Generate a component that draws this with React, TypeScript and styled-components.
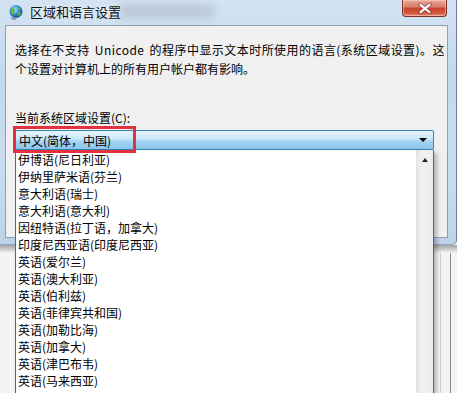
import styled, { createGlobalStyle } from "styled-components";

const GlobalStyle = createGlobalStyle`
  html, body {
    margin: 0;
    padding: 0;
    background: #dfe7ef;
  }
  * {
    box-sizing: border-box;
  }
`;

const items = [
  "伊博语(尼日利亚)",
  "伊纳里萨米语(芬兰)",
  "意大利语(瑞士)",
  "意大利语(意大利)",
  "因纽特语(拉丁语，加拿大)",
  "印度尼西亚语(印度尼西亚)",
  "英语(爱尔兰)",
  "英语(澳大利亚)",
  "英语(伯利兹)",
  "英语(菲律宾共和国)",
  "英语(加勒比海)",
  "英语(加拿大)",
  "英语(津巴布韦)",
  "英语(马来西亚)",
];

function GlobeIcon() {
  return (
    <svg width="16" height="16" viewBox="0 0 16 16">
      <defs>
        <radialGradient id="gl" cx="40%" cy="35%" r="65%">
          <stop offset="0%" stopColor="#bfe6ff" />
          <stop offset="55%" stopColor="#2f8fd8" />
          <stop offset="100%" stopColor="#124f96" />
        </radialGradient>
      </defs>
      <circle cx="8" cy="7.5" r="6.5" fill="url(#gl)" />
      <path
        d="M4 4.5c1.2-.6 2.4-.2 3 .8.4.8-.3 1.6-1.2 1.8-.9.3-1.1 1.2-.6 2 .5.9.2 1.9-.8 2.2-1.2-1-2-2.6-2-4.3 0-1 .6-1.9 1.6-2.5z M9.5 3c1.3.2 2.6 1 3.3 2.3-.8.4-1.6.1-2.2-.5-.5-.5-1.2-.9-1.1-1.8z M10.5 8.2c.9-.3 1.9.2 2.3 1-.4 1.4-1.4 2.5-2.6 3.1-.6-.9-.4-2.2.3-4.1z"
        fill="#5cb83a"
      />
      <path d="M3 13.5c1.5 1.6 3.5 1.9 5.2 1.2" stroke="#8e9aa6" strokeWidth="1.6" fill="none" />
    </svg>
  );
}

function App() {
  return (
    <>
      <GlobalStyle />
      <Screen>
        <DialogWindow>
          <TitleBar>
            <GlassSmudge />
            <TitleLeft>
              <GlobeIcon />
              <TitleText>区域和语言设置</TitleText>
            </TitleLeft>
            <CloseButton>
              <svg width="14" height="11" viewBox="0 0 14 11">
                <path
                  d="M2 1.5 L12 9.5 M12 1.5 L2 9.5"
                  stroke="#5a1a14"
                  strokeWidth="3.6"
                  strokeLinecap="round"
                  opacity="0.45"
                />
                <path
                  d="M2.5 1.8 L11.5 9.2 M11.5 1.8 L2.5 9.2"
                  stroke="#ffffff"
                  strokeWidth="2.2"
                  strokeLinecap="round"
                />
              </svg>
            </CloseButton>
          </TitleBar>
          <ClientArea>
            <Description>
              <DescLine $wide>
                选择在不支持 Unicode 的程序中显示文本时所使用的语言(系统区域设置)。这
              </DescLine>
              <DescLine>个设置对计算机上的所有用户帐户都有影响。</DescLine>
            </Description>
            <FieldLabel>当前系统区域设置(C):</FieldLabel>
            <ComboBox>
              <ComboText>中文(简体，中国)</ComboText>
              <ComboArrow />
            </ComboBox>
          </ClientArea>
        </DialogWindow>
        <BehindArea>
          <ShadowBand />
          <BehindLines>
            <BehindLine />
            <BehindLine $dark />
          </BehindLines>
        </BehindArea>

        <DropList>
          <ItemColumn>
            {items.map((name) => (
              <ListItem key={name}>{name}</ListItem>
            ))}
          </ItemColumn>
          <ScrollBar>
            <ScrollUp />
          </ScrollBar>
        </DropList>
        <Highlight />
      </Screen>
    </>
  );
}

const Screen = styled.div`
  position: relative;
  width: 457px;
  height: 393px;
  overflow: hidden;
  display: flex;
  flex-direction: column;
  font-family: "Noto Sans CJK SC", "Liberation Sans", sans-serif;
  font-size: 12px;
  color: #000;
  background: #f2f2f2;
`;

const DialogWindow = styled.div`
  height: 245px;
  flex-shrink: 0;
  display: flex;
  flex-direction: column;
  padding: 0 8px 6px 5px;
  background: linear-gradient(
    180deg,
    #d3e3f3 0%,
    #c5d9ee 30%,
    #c9dcef 70%,
    #bed3ea 100%
  );
  border-bottom: 1px solid #8fa6bf;
  border-right: 1px solid #6f8194;
  border-bottom-right-radius: 5px;
`;

const TitleBar = styled.div`
  position: relative;
  height: 25px;
  flex-shrink: 0;
  display: flex;
  align-items: flex-start;
  justify-content: space-between;
`;

const GlassSmudge = styled.div`
  position: absolute;
  left: 110px;
  top: 5px;
  width: 100px;
  height: 12px;
  background: rgba(90, 100, 115, 0.22);
  filter: blur(5px);
  border-radius: 6px;
`;

const TitleLeft = styled.div`
  position: relative;
  display: flex;
  align-items: center;
  gap: 6px;
  padding: 3px 0 0 3px;
`;

const TitleText = styled.span`
  font-size: 13px;
  line-height: 18px;
  color: #111;
  text-shadow: 0 0 6px rgba(255, 255, 255, 0.9);
`;

const CloseButton = styled.div`
  width: 45px;
  height: 17px;
  margin-right: 1px;
  display: flex;
  align-items: center;
  justify-content: center;
  border: 1px solid #7a2f26;
  border-top: none;
  border-radius: 0 0 4px 4px;
  background: linear-gradient(
    180deg,
    #e9a99a 0%,
    #d97a66 45%,
    #c7432a 50%,
    #d2563d 80%,
    #e5896f 100%
  );
  box-shadow: inset 0 0 0 1px rgba(255, 220, 210, 0.5);
`;

const ClientArea = styled.div`
  flex: 1;
  display: flex;
  flex-direction: column;
  padding: 14px 10px 0 9px;
  background: #f0f0f0;
  border: 1px solid #8e9fb3;
`;

const Description = styled.div`
  display: flex;
  flex-direction: column;
`;

const DescLine = styled.div<{ $wide?: boolean }>`
  line-height: 19px;
  white-space: nowrap;
  letter-spacing: ${(p) => (p.$wide ? "0.45px" : "0")};
  word-spacing: ${(p) => (p.$wide ? "2px" : "0")};
`;

const FieldLabel = styled.div`
  margin-top: 30px;
  line-height: 19px;
`;

const ComboBox = styled.div`
  margin-top: 3px;
  width: 419px;
  height: 20px;
  display: flex;
  align-items: center;
  justify-content: space-between;
  padding: 0 6px 0 3px;
  border: 1px solid #3c7fb1;
  border-radius: 2px;
  background: linear-gradient(
    180deg,
    #e5f4fc 0%,
    #c9e7f8 45%,
    #a6d5f3 55%,
    #8cc6ec 100%
  );
`;

const ComboText = styled.span`
  line-height: 17px;
`;

const ComboArrow = styled.span`
  width: 0;
  height: 0;
  border-left: 4px solid transparent;
  border-right: 4px solid transparent;
  border-top: 4px solid #000;
`;

const BehindArea = styled.div`
  flex: 1;
  display: flex;
  flex-direction: column;
  background: #f4f4f4;
`;

const ShadowBand = styled.div`
  height: 8px;
  background: linear-gradient(180deg, rgba(60, 60, 60, 0.45), rgba(60, 60, 60, 0));
`;

const BehindLines = styled.div`
  flex: 1;
  display: flex;
  justify-content: flex-end;
  gap: 9px;
  padding-right: 6px;
`;

const BehindLine = styled.div<{ $dark?: boolean }>`
  width: 1px;
  background: ${(p) => (p.$dark ? "#8a8a8a" : "#d0d0d0")};
`;

const DropList = styled.div`
  position: absolute;
  left: 15px;
  top: 150px;
  width: 419px;
  height: 260px;
  display: flex;
  background: #fff;
  border: 1px solid #646464;
  border-top: none;
  box-shadow: 3px 3px 4px rgba(0, 0, 0, 0.25);
`;

const ItemColumn = styled.div`
  flex: 1;
  display: flex;
  flex-direction: column;
  padding: 1px 0 0 2px;
`;

const ListItem = styled.div`
  height: 17px;
  line-height: 17px;
  white-space: nowrap;
`;

const ScrollBar = styled.div`
  width: 17px;
  display: flex;
  justify-content: center;
  padding-top: 8px;
  background: linear-gradient(90deg, #e8e8e8, #f2f2f2 40%, #ececec);
  border-left: 1px solid #e2e2e2;
`;

const ScrollUp = styled.span`
  width: 0;
  height: 0;
  border-left: 3.5px solid transparent;
  border-right: 3.5px solid transparent;
  border-bottom: 4px solid #222;
`;

const Highlight = styled.div`
  position: absolute;
  left: 13px;
  top: 126px;
  width: 123px;
  height: 27px;
  border: 3px solid #e3323b;
`;

export default App;
